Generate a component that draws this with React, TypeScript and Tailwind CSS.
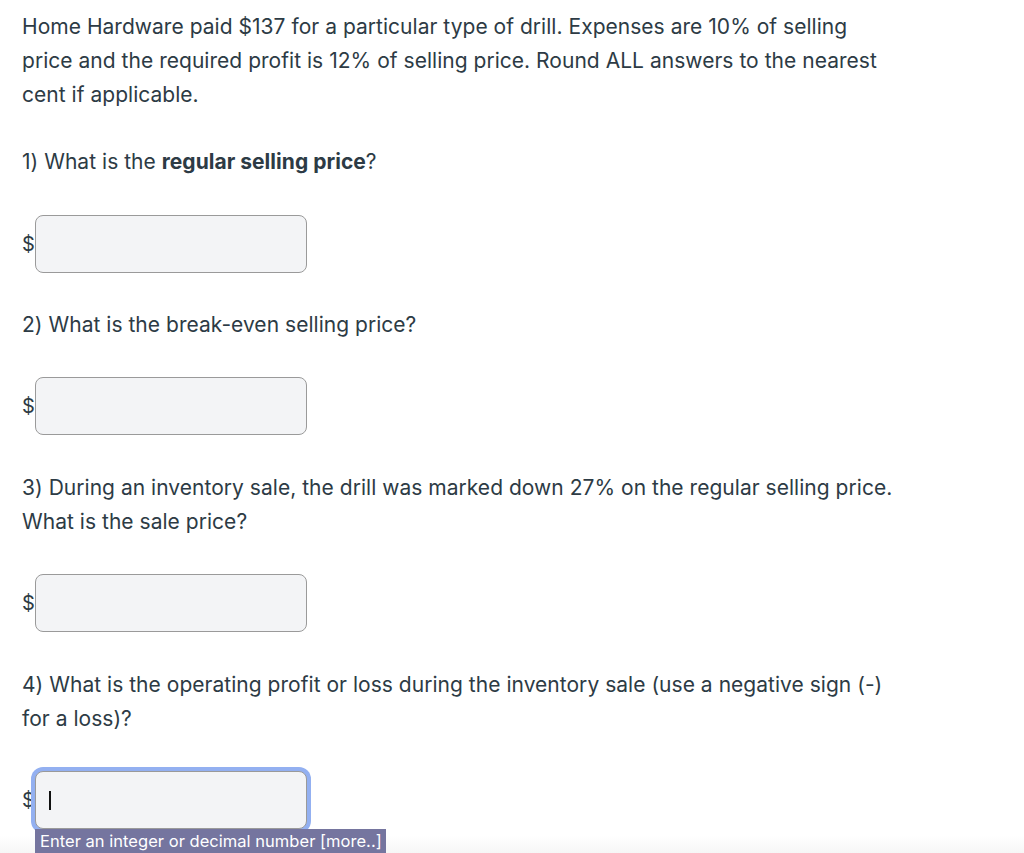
import React from "react";

const font = { fontFamily: 'Inter, "Liberation Sans", Arial, sans-serif' };

function Field({ focused }: { focused?: boolean }) {
  return (
    <div className="flex items-center">
      <span className="w-[13px] text-[20px] leading-[34px] text-[#2d3b45]">$</span>
      <div className="relative">
        <div
          className={
            "w-[272px] h-[58px] rounded-[8px] border border-[#9a9a9a] bg-[#f3f4f6] flex items-center pl-[13px] " +
            (focused ? "shadow-[0_0_0_4px_#93b0f1]" : "")
          }
        >
          {focused && <span className="block w-[1.5px] h-[19px] bg-[#111]" />}
        </div>
        {focused && (
          <div className="absolute left-0 top-[58px] whitespace-nowrap bg-[#75759f] text-white text-[16.5px] leading-[25px] px-[5px] w-[351px]">
            Enter an integer or decimal number [more..]
          </div>
        )}
      </div>
    </div>
  );
}

export default function App() {
  return (
    <div
      className="w-[1024px] h-[853px] overflow-hidden bg-[linear-gradient(to_bottom,#ffffff_0px,#ffffff_835px,#f6f6f6_853px)] text-[#2d3b45] text-[21px] tracking-[0.03px] leading-[34px] pl-[22px] pt-[10px]"
      style={font}
    >
      <p className="w-[876px]">
        Home Hardware paid $137 for a particular type of drill. Expenses are 10% of selling price and the required profit is 12% of selling price. Round ALL answers to the nearest cent if applicable.
      </p>
      <p className="mt-[33px]">
        1) What is the <b className="font-bold">regular selling price</b>?
      </p>
      <div className="mt-[36px]">
        <Field />
      </div>
      <p className="mt-[35px]">2) What is the break-even selling price?</p>
      <div className="mt-[35px]">
        <Field />
      </div>
      <p className="mt-[36px] w-[876px]">
        3) During an inventory sale, the drill was marked down 27% on the regular selling price. What is the sale price?
      </p>
      <div className="mt-[35px]">
        <Field />
      </div>
      <p className="mt-[36px] w-[876px]">
        4) What is the operating profit or loss during the inventory sale (use a negative sign (-) for a loss)?
      </p>
      <div className="mt-[35px]">
        <Field focused />
      </div>
    </div>
  );
}
